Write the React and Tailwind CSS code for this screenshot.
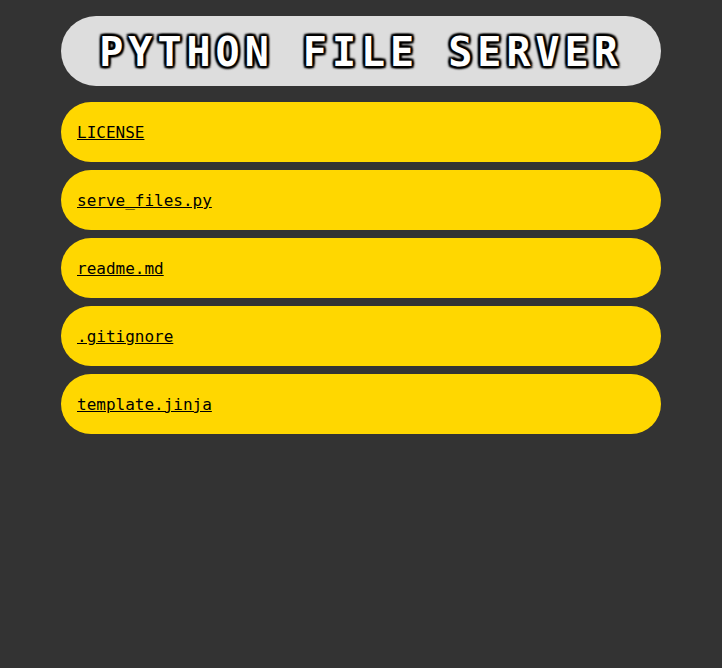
const files = ['LICENSE', 'serve_files.py', 'readme.md', '.gitignore', 'template.jinja'];

export default function App() {
  return (
    <div className="min-h-screen bg-[#333333] pt-4 font-['DejaVu_Sans_Mono',monospace]">
      <div className="mx-auto w-[600px]">
        <div className="flex h-[70px] items-center justify-center rounded-[35px] bg-[#dddddd] pt-px">
          <h1 className="text-[40px] font-bold leading-none tracking-[5px] text-white [text-shadow:-2px_-2px_2px_#000,2px_-2px_2px_#000,-2px_2px_2px_#000,2px_2px_2px_#000,0_2px_2px_#000,0_-2px_2px_#000,2px_0_2px_#000,-2px_0_2px_#000]">
            PYTHON FILE SERVER
          </h1>
        </div>
        <div className="mt-4 flex flex-col gap-2">
          {files.map((name) => (
            <div key={name} className="flex h-[60px] items-center rounded-[30px] bg-[#ffd700] px-4 pt-0.5">
              <a href="#" className="text-base text-black underline">
                {name}
              </a>
            </div>
          ))}
        </div>
      </div>
    </div>
  );
}
